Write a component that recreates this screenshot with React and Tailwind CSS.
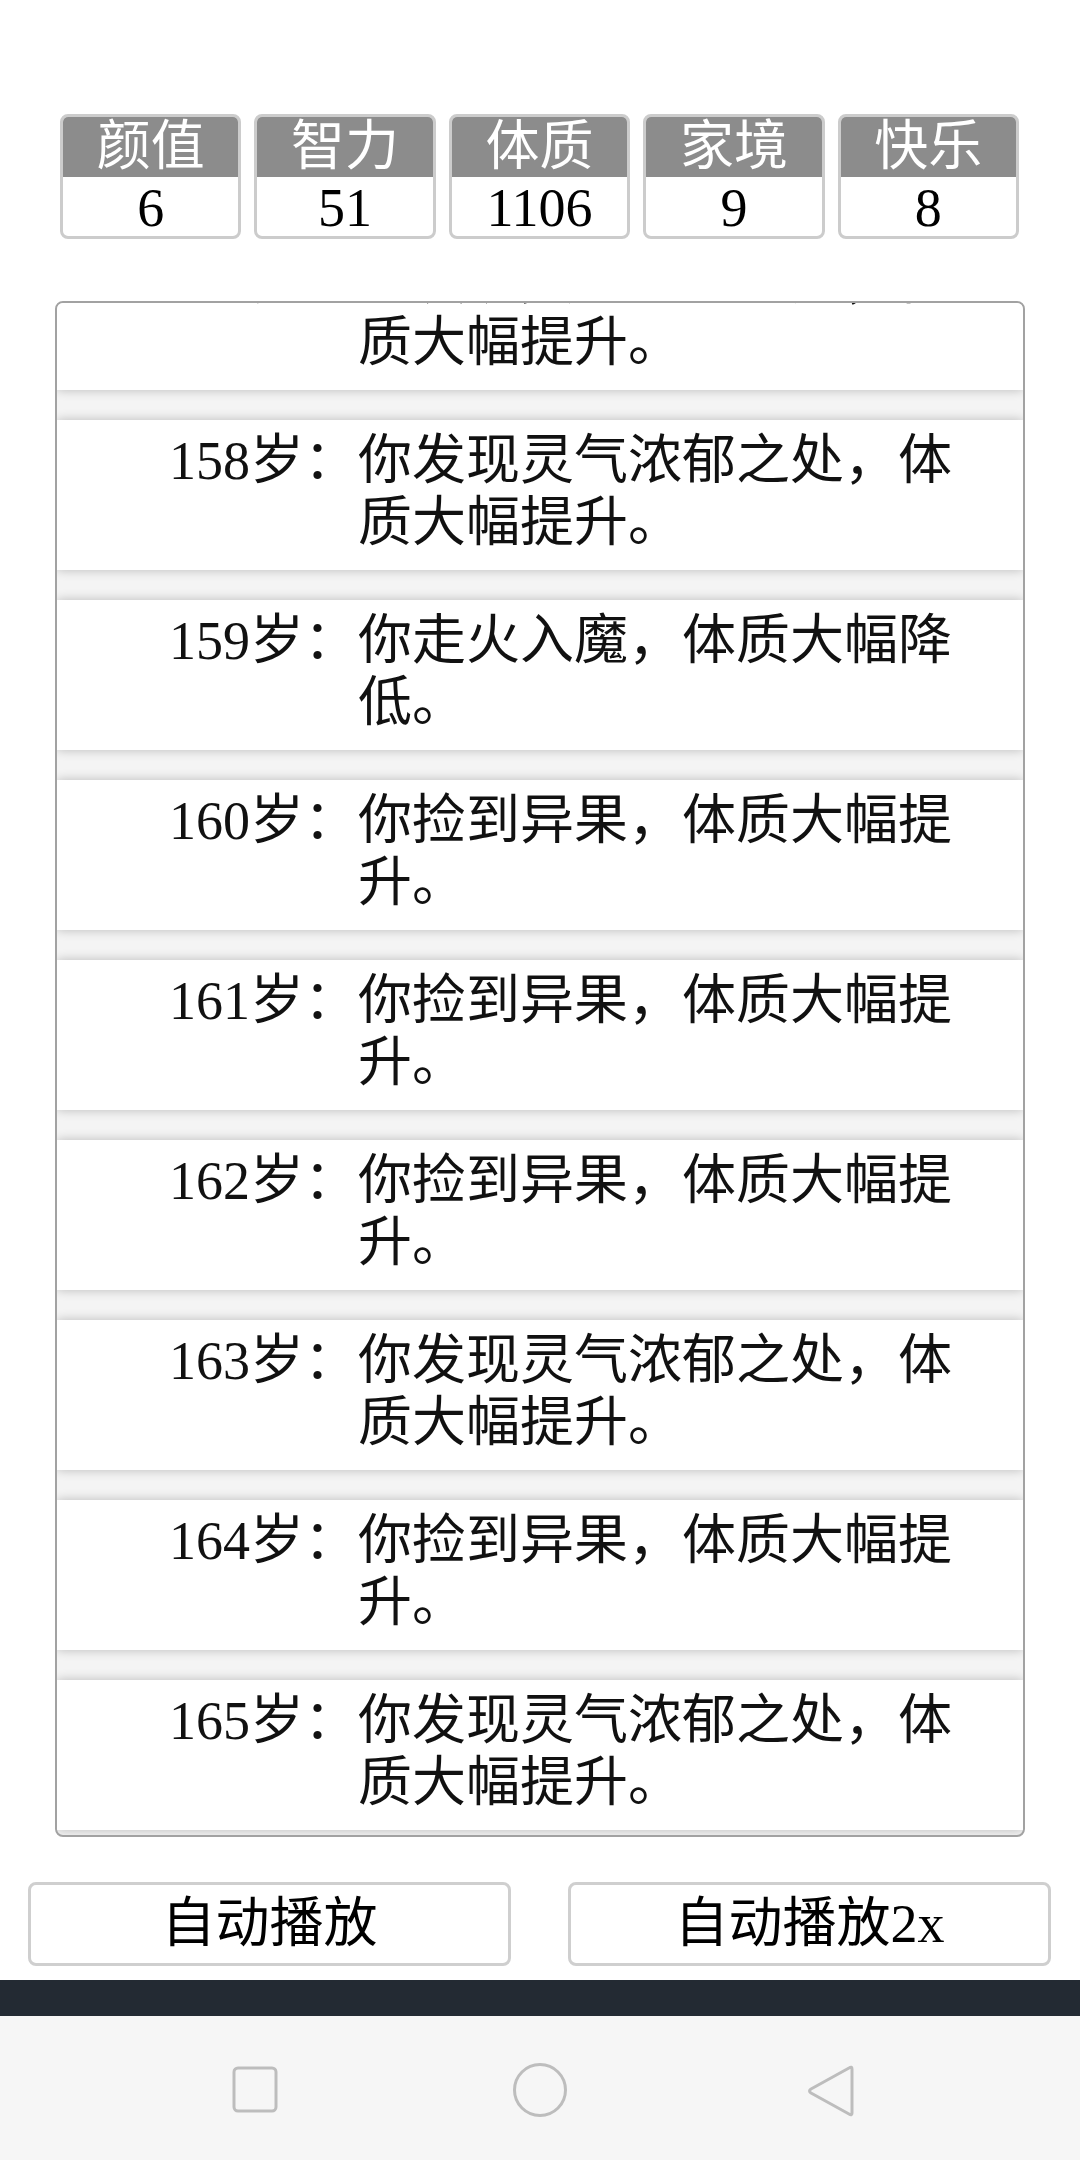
import React from 'react';

const stats = [
  { label: '颜值', value: 6 },
  { label: '智力', value: 51 },
  { label: '体质', value: 1106 },
  { label: '家境', value: 9 },
  { label: '快乐', value: 8 },
];

const lingqi = '你发现灵气浓郁之处，体质大幅提升。';
const yiguo = '你捡到异果，体质大幅提升。';

const events = [
  { age: 157, text: lingqi },
  { age: 158, text: lingqi },
  { age: 159, text: '你走火入魔，体质大幅降低。' },
  { age: 160, text: yiguo },
  { age: 161, text: yiguo },
  { age: 162, text: yiguo },
  { age: 163, text: lingqi },
  { age: 164, text: yiguo },
  { age: 165, text: lingqi },
  { age: 166, text: yiguo },
];

const font = { fontFamily: '"Liberation Serif", "Noto Sans CJK SC", serif' };

const StatBox = ({ label, value }) => (
  <div className="flex-1 flex flex-col rounded-[8px] border-[3px] border-[#cccccc] overflow-hidden bg-white">
    <div className="h-[60px] bg-[#8c8c8c] text-white text-[54px] leading-[60px] text-center">{label}</div>
    <div className="h-[59px] text-black text-[54px] leading-[62px] text-center">{value}</div>
  </div>
);

const EventRow = ({ age, text }) => (
  <li className="h-[150px] shrink-0 bg-white flex pt-[10px] shadow-[0_0_10px_rgba(0,0,0,0.24)]">
    <div className="w-[301px] text-right text-[54px] leading-[62px] text-[#111]">{age}岁：</div>
    <div className="w-[610px] text-left text-[54px] leading-[62px] text-[#111]">{text}</div>
  </li>
);

export default function App() {
  return (
    <div className="w-[1080px] h-[2160px] bg-white flex flex-col overflow-hidden" style={font}>
      {/* Attributes */}
      <div className="mt-[114px] h-[125px] flex gap-[13px] pl-[60px] pr-[61px]">
        {stats.map((s) => (
          <StatBox key={s.label} {...s} />
        ))}
      </div>

      {/* Life log */}
      <div className="mt-[62px] mx-[55px] h-[1536px] rounded-[8px] border-2 border-[#a2a2a2] overflow-hidden bg-[#f4f4f4]">
        <ul className="-mt-[63px] flex flex-col gap-[30px]">
          {events.map((e) => (
            <EventRow key={e.age} {...e} />
          ))}
        </ul>
      </div>

      {/* Controls */}
      <div className="mt-[45px] h-[84px] flex gap-[57px] pl-[28px] pr-[29px]">
        <button className="flex-1 rounded-[8px] border-[3px] border-[#cfcfcf] bg-white text-black text-[54px] leading-none">
          自动播放
        </button>
        <button className="flex-1 rounded-[8px] border-[3px] border-[#cfcfcf] bg-white text-black text-[54px] leading-none">
          自动播放2x
        </button>
      </div>

      <div className="mt-[14px] h-[36px] bg-[#232a33]" />

      {/* System navigation */}
      <div className="flex-1 bg-[#f6f6f6] flex items-start pt-[46px]">
        <div className="w-full relative h-[56px]">
          <svg className="absolute left-[232px] top-[4px]" width="46" height="47" viewBox="0 0 46 47">
            <rect x="2" y="2" width="42" height="43" rx="4" fill="none" stroke="#bdbdbd" strokeWidth="3" />
          </svg>
          <svg className="absolute left-[512px] top-0" width="56" height="56" viewBox="0 0 56 56">
            <circle cx="28" cy="28" r="25.5" fill="none" stroke="#bdbdbd" strokeWidth="3" />
          </svg>
          <svg className="absolute left-[804px] top-[2px]" width="54" height="54" viewBox="0 0 54 54">
            <path d="M48 5 Q48 2 45 4 L7 25 Q4 27 7 29 L45 50 Q48 52 48 49 Z" fill="none" stroke="#bdbdbd" strokeWidth="3" strokeLinejoin="round" />
          </svg>
        </div>
      </div>
    </div>
  );
}
